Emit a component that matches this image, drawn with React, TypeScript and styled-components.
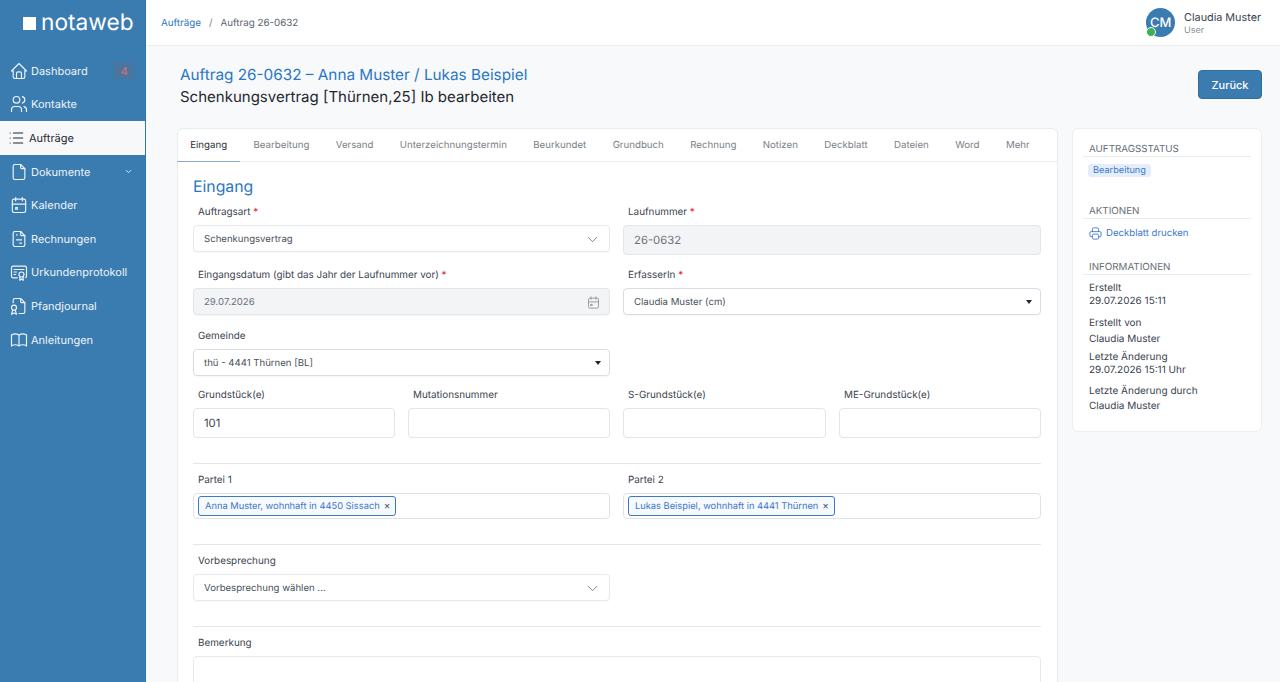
import React from "react";
import styled, { createGlobalStyle } from "styled-components";
import {
  TbBook,
  TbCalendarEvent,
  TbCertificate,
  TbChevronDown,
  TbFile,
  TbFileCertificate,
  TbFileInvoice,
  TbHome,
  TbList,
  TbPrinter,
  TbUsers,
} from "react-icons/tb";

const GlobalStyle = createGlobalStyle`
  html, body { margin: 0; padding: 0; height: 100%; overflow: hidden; }
  body {
    font-family: Inter, "Noto Sans", sans-serif;
    background: #f7f9fa;
    color: #3a4350;
    text-rendering: geometricPrecision;
  }
  #root { height: 100%; }
  * { box-sizing: border-box; }
`;

const navItems = [
  { label: "Dashboard", Icon: TbHome, badge: "4" },
  { label: "Kontakte", Icon: TbUsers },
  { label: "Aufträge", Icon: TbList, active: true },
  { label: "Dokumente", Icon: TbFile, caret: true },
  { label: "Kalender", Icon: TbCalendarEvent },
  { label: "Rechnungen", Icon: TbFileInvoice },
  { label: "Urkundenprotokoll", Icon: TbCertificate },
  { label: "Pfandjournal", Icon: TbFileCertificate },
  { label: "Anleitungen", Icon: TbBook },
];

const tabs = [
  "Eingang",
  "Bearbeitung",
  "Versand",
  "Unterzeichnungstermin",
  "Beurkundet",
  "Grundbuch",
  "Rechnung",
  "Notizen",
  "Deckblatt",
  "Dateien",
  "Word",
  "Mehr",
];

const infos = [
  { key: "Erstellt", value: "29.07.2026 15:11", top: 0, inner: 0 },
  { key: "Erstellt von", value: "Claudia Muster", top: 9, inner: 3 },
  { key: "Letzte Änderung", value: "29.07.2026 15:11 Uhr", top: 5, inner: 0 },
  { key: "Letzte Änderung durch", value: "Claudia Muster", top: 8, inner: 2 },
];

const App = () => (
  <Shell>
    <GlobalStyle />
    <Sidebar>
      <Logo>
        <LogoMark />
        notaweb
      </Logo>
      <Nav>
        {navItems.map(({ label, Icon, badge, active, caret }) => (
          <NavItem key={label} $active={active}>
            <Icon size={20} strokeWidth={1.4} />
            <span>{label}</span>
            {badge && <NavBadge>{badge}</NavBadge>}
            {caret && <NavCaret size={9} strokeWidth={2.4} />}
          </NavItem>
        ))}
      </Nav>
    </Sidebar>
    <Main>
      <Topbar>
        <Crumbs>
          <CrumbLink>Aufträge</CrumbLink>
          <CrumbSep>/</CrumbSep>
          <span>Auftrag 26-0632</span>
        </Crumbs>
        <UserBox>
          <Avatar>
            CM
            <OnlineDot />
          </Avatar>
          <UserText>
            <UserName>Claudia Muster</UserName>
            <UserRole>User</UserRole>
          </UserText>
        </UserBox>
      </Topbar>
      <Content>
        <TitleRow>
          <div>
            <PageTitle>Auftrag 26-0632 – Anna Muster / Lukas Beispiel</PageTitle>
            <PageSubtitle>Schenkungsvertrag [Thürnen,25] Ib bearbeiten</PageSubtitle>
          </div>
          <BackButton>Zurück</BackButton>
        </TitleRow>
        <Columns>
          <FormCard>
            <TabBar>
              {tabs.map((t, i) => (
                <Tab key={t} $active={i === 0}>
                  {t}
                </Tab>
              ))}
            </TabBar>
            <FormBody>
              <SectionTitle>Eingang</SectionTitle>
              <TwoCols $mb={13}>
                <Field>
                  <Label>
                    Auftragsart <Req>*</Req>
                  </Label>
                  <SoftSelect>
                    Schenkungsvertrag
                    <TbChevronDown size={17} strokeWidth={1.2} />
                  </SoftSelect>
                </Field>
                <Field>
                  <Label>
                    Laufnummer <Req>*</Req>
                  </Label>
                  <Input $disabled>26-0632</Input>
                </Field>
              </TwoCols>
              <TwoCols $mb={14}>
                <Field>
                  <Label>
                    Eingangsdatum (gibt das Jahr der Laufnummer vor) <Req>*</Req>
                  </Label>
                  <DateInput>
                    29.07.2026
                    <TbCalendarEvent size={15} strokeWidth={1.3} />
                  </DateInput>
                </Field>
                <Field>
                  <Label>
                    ErfasserIn <Req>*</Req>
                  </Label>
                  <NativeSelect>
                    Claudia Muster (cm)
                    <Caret />
                  </NativeSelect>
                </Field>
              </TwoCols>
              <TwoCols $mb={12}>
                <Field>
                  <Label>Gemeinde</Label>
                  <NativeSelect>
                    thü - 4441 Thürnen [BL]
                    <Caret />
                  </NativeSelect>
                </Field>
              </TwoCols>
              <FourCols>
                <Field>
                  <Label>Grundstück(e)</Label>
                  <Input>101</Input>
                </Field>
                <Field>
                  <Label>Mutationsnummer</Label>
                  <Input />
                </Field>
                <Field>
                  <Label>S-Grundstück(e)</Label>
                  <Input />
                </Field>
                <Field>
                  <Label>ME-Grundstück(e)</Label>
                  <Input />
                </Field>
              </FourCols>
              <Rule />
              <TwoCols>
                <Field>
                  <Label>Partei 1</Label>
                  <TagBox>
                    <Tag>
                      Anna Muster, wohnhaft in 4450 Sissach <TagClose>×</TagClose>
                    </Tag>
                  </TagBox>
                </Field>
                <Field>
                  <Label>Partei 2</Label>
                  <TagBox>
                    <Tag>
                      Lukas Beispiel, wohnhaft in 4441 Thürnen <TagClose>×</TagClose>
                    </Tag>
                  </TagBox>
                </Field>
              </TwoCols>
              <Rule />
              <TwoCols>
                <Field>
                  <Label>Vorbesprechung</Label>
                  <SoftSelect>
                    Vorbesprechung wählen ...
                    <TbChevronDown size={17} strokeWidth={1.2} />
                  </SoftSelect>
                </Field>
              </TwoCols>
              <Rule />
              <Field>
                <Label>Bemerkung</Label>
                <TextArea />
              </Field>
            </FormBody>
          </FormCard>
          <SideCard>
            <SideHeading>Auftragsstatus</SideHeading>
            <StatusPill>Bearbeitung</StatusPill>
            <SideHeading $mt={28}>Aktionen</SideHeading>
            <PrintLink>
              <TbPrinter size={15} strokeWidth={1.4} />
              Deckblatt drucken
            </PrintLink>
            <SideHeading $mt={21}>Informationen</SideHeading>
            <InfoList>
              {infos.map(({ key, value, top, inner }) => (
                <InfoItem key={key} $top={top} $inner={inner}>
                  <span>{key}</span>
                  <span>{value}</span>
                </InfoItem>
              ))}
            </InfoList>
          </SideCard>
        </Columns>
      </Content>
    </Main>
  </Shell>
);

export default App;

const Shell = styled.div`
  display: flex;
  height: 682px;
  overflow: hidden;
`;

const Sidebar = styled.aside`
  flex: 0 0 146px;
  background: #3a7bb0;
  border-right: 1px solid #2f77b0;
  color: #f2f7fb;
`;

const Logo = styled.div`
  display: flex;
  align-items: center;
  height: 45px;
  padding-left: 23px;
  font-size: 22.7px;
  color: #fff;
`;

const LogoMark = styled.span`
  width: 13px;
  height: 13px;
  margin-right: 5px;
  margin-top: 1px;
  background: #fff;
`;

const Nav = styled.nav`
  display: flex;
  flex-direction: column;
  padding-top: 9px;
`;

const NavItem = styled.div<{ $active?: boolean }>`
  display: flex;
  align-items: center;
  gap: ${({ $active }) => ($active ? "3px" : "2px")};
  height: 33.6px;
  padding-left: ${({ $active }) => ($active ? "6px" : "9px")};
  font-size: 11px;
  background: ${({ $active }) => ($active ? "#f7f8f9" : "transparent")};
  color: ${({ $active }) => ($active ? "#1f2730" : "#eef4f9")};
`;

const NavBadge = styled.span`
  margin-left: auto;
  margin-right: 11px;
  width: 20px;
  height: 17px;
  border-radius: 3px;
  display: flex;
  align-items: center;
  justify-content: center;
  background: #4a759f;
  color: #cf6d78;
  font-size: 11px;
  font-weight: 500;
`;

const NavCaret = styled(TbChevronDown)`
  margin-left: auto;
  margin-right: 12px;
`;

const Main = styled.div`
  flex: 1;
  min-width: 0;
  display: flex;
  flex-direction: column;
`;

const Topbar = styled.header`
  display: flex;
  align-items: center;
  justify-content: space-between;
  height: 46px;
  flex: none;
  padding: 0 19px 0 15px;
  background: #fff;
  border-bottom: 1px solid #eceef0;
`;

const Crumbs = styled.div`
  display: flex;
  gap: 7px;
  padding-top: 2px;
  font-size: 9.8px;
  color: #5c6570;
`;

const CrumbLink = styled.span`
  color: #2a76c4;
`;

const CrumbSep = styled.span`
  color: #7a828c;
  margin: 0 1px;
`;

const UserBox = styled.div`
  display: flex;
  align-items: center;
  gap: 9px;
`;

const Avatar = styled.div`
  position: relative;
  width: 29px;
  height: 29px;
  border-radius: 50%;
  background: #3a7bb0;
  color: #fff;
  font-size: 13px;
  font-weight: 500;
  display: flex;
  align-items: center;
  justify-content: center;
`;

const OnlineDot = styled.span`
  position: absolute;
  left: 0;
  bottom: 0;
  width: 10px;
  height: 10px;
  border-radius: 50%;
  background: #3cb054;
  border: 1px solid #fff;
`;

const UserText = styled.div`
  display: flex;
  flex-direction: column;
  gap: 1px;
  padding-top: 2px;
`;

const UserName = styled.span`
  font-size: 10.8px;
  line-height: 13px;
  color: #3a4350;
`;

const UserRole = styled.span`
  font-size: 9px;
  line-height: 11px;
  color: #868e96;
`;

const Content = styled.div`
  flex: 1;
  min-height: 0;
  padding: 0 18px 0 31px;
`;

const TitleRow = styled.div`
  display: flex;
  justify-content: space-between;
  height: 82px;
  padding: 18px 0 0 3px;
`;

const PageTitle = styled.div`
  font-size: 15.3px;
  line-height: 22px;
  color: #2a76c4;
`;

const PageSubtitle = styled.div`
  font-size: 15px;
  line-height: 22px;
  color: #1f2730;
`;

const BackButton = styled.button`
  align-self: flex-start;
  margin-top: 6px;
  width: 64px;
  height: 29px;
  padding: 0;
  background: #3a7bb0;
  border: 1px solid #2f6d9f;
  border-radius: 4px;
  color: #fff;
  font: 500 11px Inter, sans-serif;
`;

const Columns = styled.div`
  display: flex;
  align-items: flex-start;
  gap: 14px;
`;

const FormCard = styled.section`
  width: 881px;
  flex: none;
  background: #fff;
  border: 1px solid #e9ecef;
  border-radius: 6px 6px 0 0;
`;

const TabBar = styled.div`
  display: flex;
  height: 33px;
  border-bottom: 1px solid #e9ecef;
`;

const Tab = styled.div<{ $active?: boolean }>`
  padding: 0 13.2px;
  margin-left: ${({ $active }) => ($active ? "-1px" : "0")};
  display: flex;
  align-items: center;
  font-size: 9.7px;
  height: 33px;
  color: ${({ $active }) => ($active ? "#2a3138" : "#7a8189")};
  border-bottom: 1px solid ${({ $active }) => ($active ? "#8aa9dc" : "transparent")};
`;

const FormBody = styled.div`
  padding: 15px 16px 0 15px;
`;

const SectionTitle = styled.h2`
  margin: 0 0 8px;
  font-size: 15.8px;
  line-height: 20px;
  font-weight: 400;
  color: #2a76c4;
`;

const TwoCols = styled.div<{ $mb?: number }>`
  display: grid;
  grid-template-columns: 417px 1fr;
  gap: 13px;
  margin-bottom: ${({ $mb }) => $mb ?? 0}px;
`;

const FourCols = styled.div`
  display: grid;
  grid-template-columns: 202px 202px 203px 1fr;
  gap: 13px;
`;

const Field = styled.div`
  display: flex;
  flex-direction: column;
  min-width: 0;
`;

const Label = styled.label`
  font-size: 9.9px;
  line-height: 15px;
  padding-left: 5px;
  margin-bottom: 5px;
  color: #3a4350;
`;

const Req = styled.span`
  color: #e5252a;
`;

const Input = styled.div<{ $disabled?: boolean }>`
  height: 30px;
  display: flex;
  align-items: center;
  padding: 0 10px;
  font-size: 11.3px;
  color: ${({ $disabled }) => ($disabled ? "#6b7280" : "#3a4350")};
  background: ${({ $disabled }) => ($disabled ? "#f3f4f6" : "#fff")};
  border: 1px solid #e2e5e9;
  border-radius: 4px;
`;

const SoftSelect = styled.div`
  height: 27px;
  display: flex;
  align-items: center;
  justify-content: space-between;
  padding: 1px 10px 0;
  font-size: 9.6px;
  color: #4a525c;
  background: #fff;
  border: 1px solid #e7e9ec;
  border-radius: 4px;
  box-shadow: 0 1px 1px rgba(0, 0, 0, 0.03);
  svg {
    color: #6b7280;
    margin-right: -2px;
  }
`;

const DateInput = styled(SoftSelect)`
  color: #6b7280;
  background: #f3f4f6;
  border-color: #e2e5e9;
  svg {
    color: #868e96;
  }
`;

const NativeSelect = styled(SoftSelect)`
  border-color: #d9dde2;
`;

const Caret = styled.span`
  width: 0;
  height: 0;
  margin-right: -2px;
  border-left: 3px solid transparent;
  border-right: 3px solid transparent;
  border-top: 4px solid #1f2730;
`;

const Rule = styled.hr`
  border: 0;
  height: 1px;
  margin: 25px 0 9px;
  background: #e4e6e9;
`;

const TagBox = styled.div`
  height: 26px;
  display: flex;
  align-items: center;
  padding: 0 4px;
  background: #fff;
  border: 1px solid #dfe2e6;
  border-radius: 4px;
`;

const Tag = styled.span`
  height: 20px;
  display: inline-flex;
  align-items: center;
  gap: 4px;
  padding: 0 5px 0 6px;
  font-size: 9.3px;
  color: #3d78c9;
  background: #f6f9fd;
  border: 1px solid #3d78c9;
  border-radius: 3px;
`;

const TagClose = styled.span`
  color: #46586f;
  font-size: 10px;
`;

const TextArea = styled.div`
  height: 100px;
  background: #fff;
  border: 1px solid #e7e9ec;
  border-radius: 4px;
`;

const SideCard = styled.aside`
  width: 190px;
  flex: none;
  height: 304px;
  padding: 14px 10px 0 10px;
  background: #fff;
  border: 1px solid #eceef0;
  border-radius: 6px;
`;

const SideHeading = styled.div<{ $mt?: number }>`
  font-size: 9.8px;
  line-height: 13px;
  padding: 0 6px;
  margin-top: ${({ $mt }) => $mt ?? 0}px;
  text-transform: uppercase;
  color: #666e78;
  border-bottom: 1px solid #e9ecef;
`;

const StatusPill = styled.div`
  width: fit-content;
  margin: 7px 0 0 5px;
  padding: 0 5px;
  height: 13px;
  line-height: 13px;
  font-size: 9.2px;
  color: #3d78c9;
  background: #e4eefb;
  border-radius: 3px;
`;

const PrintLink = styled.div`
  display: flex;
  align-items: center;
  gap: 3px;
  height: 13px;
  margin: 8px 0 0 5px;
  font-size: 9.6px;
  color: #3d78c9;
`;

const InfoList = styled.div`
  display: flex;
  flex-direction: column;
  margin: 7px 0 0 6px;
`;

const InfoItem = styled.div<{ $top: number; $inner: number }>`
  display: flex;
  flex-direction: column;
  gap: ${({ $inner }) => $inner}px;
  margin-top: ${({ $top }) => $top}px;
  font-size: 10px;
  line-height: 13px;
  color: #3a4350;
`;
